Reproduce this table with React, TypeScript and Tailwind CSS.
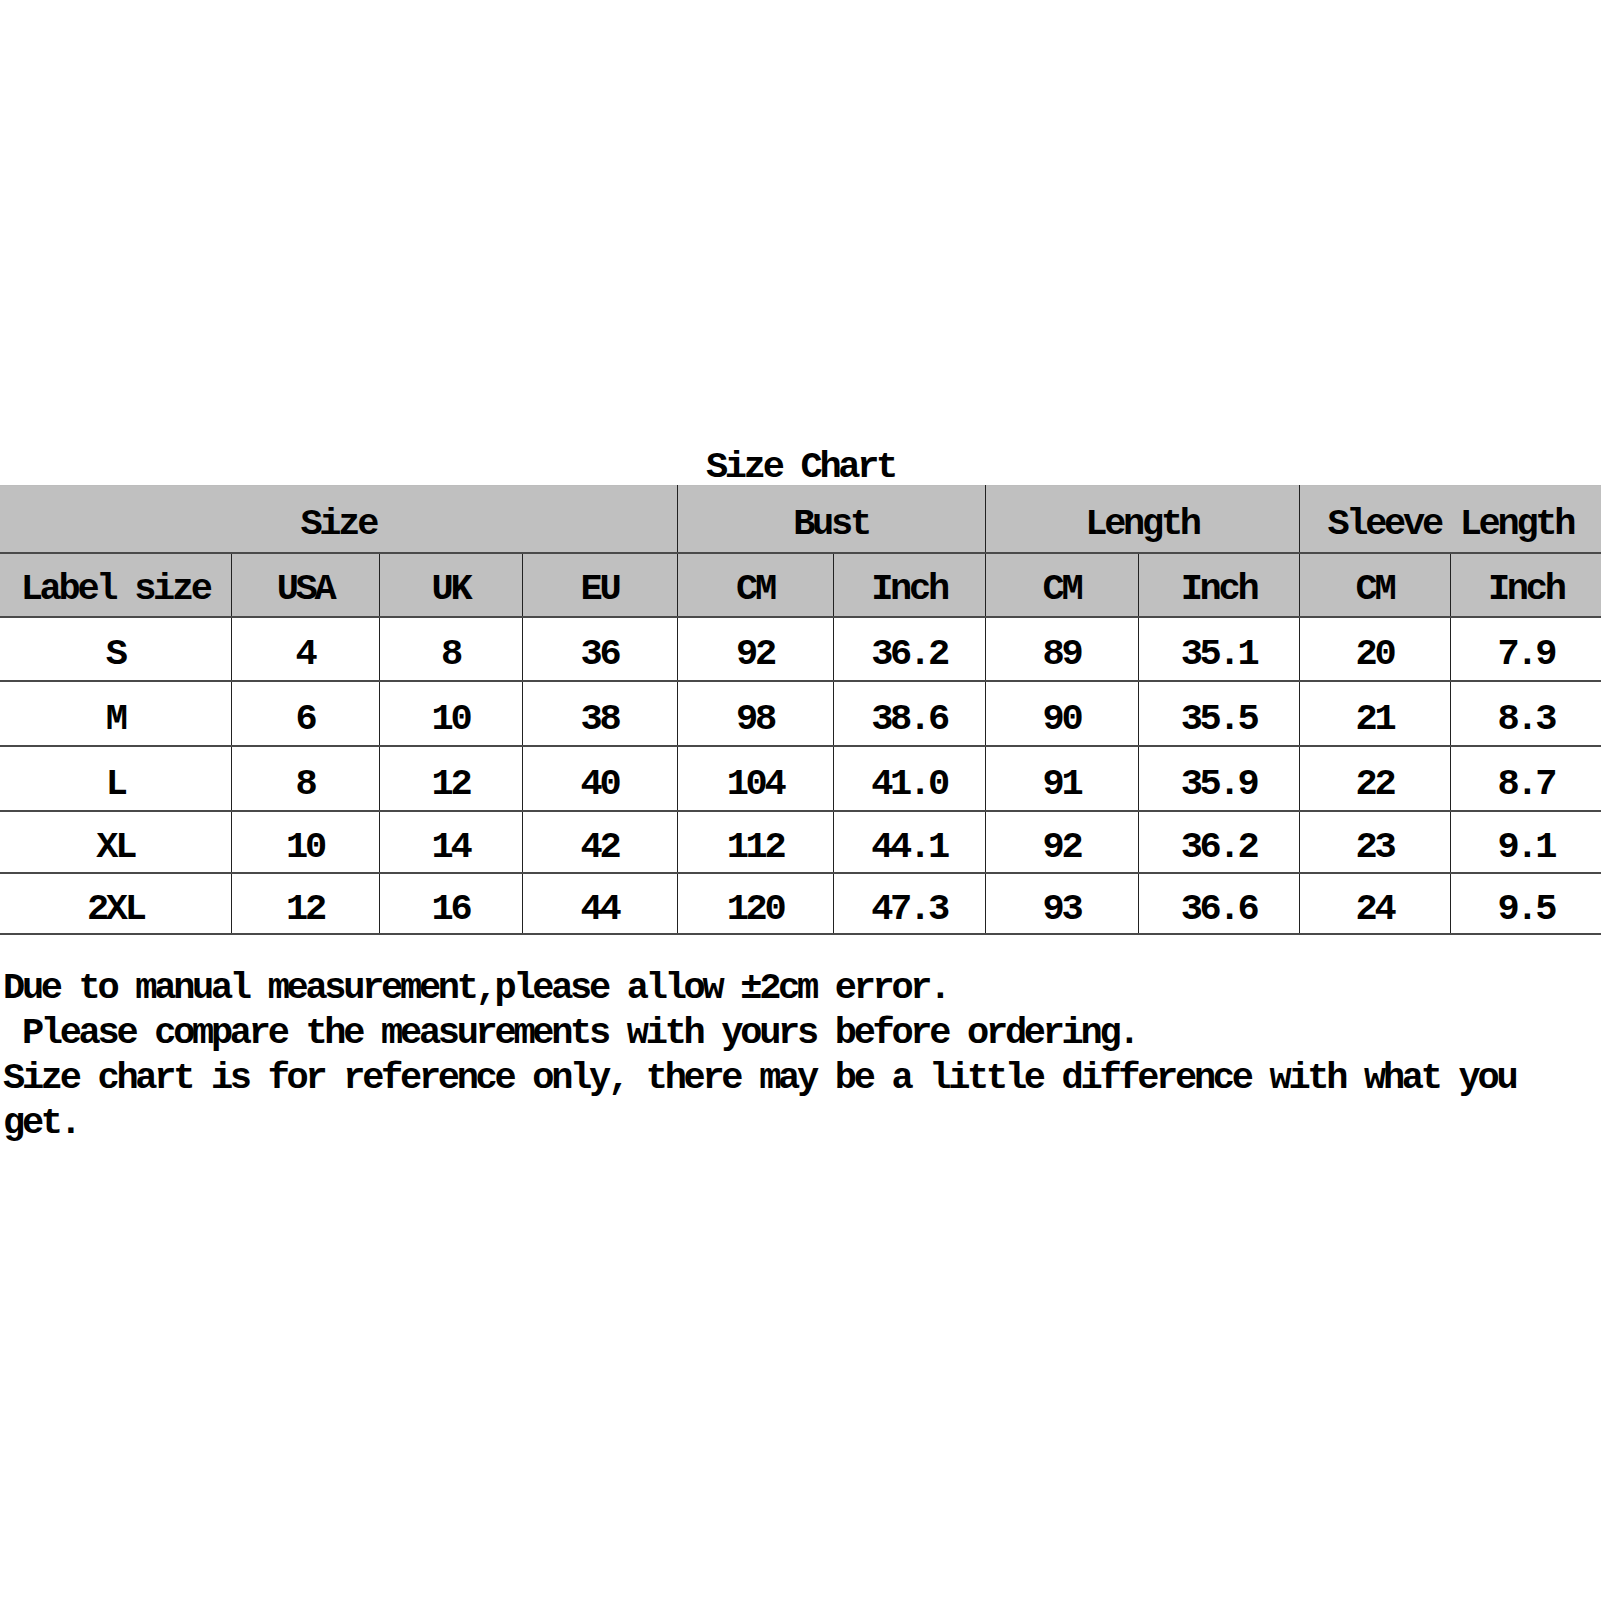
const font = "[font-family:'Liberation_Mono','DejaVu_Sans_Mono',monospace]";

const groups = [
  { label: "Size", span: 4 },
  { label: "Bust", span: 2 },
  { label: "Length", span: 2 },
  { label: "Sleeve Length", span: 2 },
];

const subHeads = ["Label size", "USA", "UK", "EU", "CM", "Inch", "CM", "Inch", "CM", "Inch"];

const rows = [
  { h: "h-[64px]", cells: ["S", "4", "8", "36", "92", "36.2", "89", "35.1", "20", "7.9"] },
  { h: "h-[65px]", cells: ["M", "6", "10", "38", "98", "38.6", "90", "35.5", "21", "8.3"] },
  { h: "h-[65px]", cells: ["L", "8", "12", "40", "104", "41.0", "91", "35.9", "22", "8.7"] },
  { h: "h-[62px]", cells: ["XL", "10", "14", "42", "112", "44.1", "92", "36.2", "23", "9.1"] },
  { h: "h-[61px]", cells: ["2XL", "12", "16", "44", "120", "47.3", "93", "36.6", "24", "9.5"] },
];

const widths = [231, 148, 143, 155, 156, 152, 153, 161, 151, 151];

export default function App() {
  return (
    <div
      className={`w-[1601px] h-[1601px] bg-white pt-[444px] text-black ${font} font-bold text-[37px] tracking-[-3.3px]`}
    >
      <h1 className="h-[41px] pt-[3px] text-center leading-[41px] text-[37px]">Size Chart</h1>
      <table className="w-[1601px] table-fixed border-collapse border-t border-[#bdbdbd] leading-[37px]">
        <colgroup>
          {widths.map((w, i) => (
            <col key={i} style={{ width: w }} />
          ))}
        </colgroup>
        <thead className="bg-[#c0c0c0]">
          <tr className="h-[67px] border-b-2 border-[#4a4a4a]">
            {groups.map((g, i) => (
              <th
                key={g.label}
                colSpan={g.span}
                className={`p-0 pt-[12px] text-center align-middle font-bold ${i > 0 ? "border-l border-[#222]" : ""}`}
              >
                {g.label}
              </th>
            ))}
          </tr>
          <tr className="h-[64px] border-b-2 border-[#4a4a4a]">
            {subHeads.map((h, i) => (
              <th
                key={i}
                className={`p-0 pt-[10px] text-center align-middle font-bold ${i > 0 ? "border-l border-[#222]" : ""}`}
              >
                {h}
              </th>
            ))}
          </tr>
        </thead>
        <tbody>
          {rows.map((r) => (
            <tr key={r.cells[0]} className={`${r.h} border-b-2 border-[#4a4a4a]`}>
              {r.cells.map((c, i) => (
                <td
                  key={i}
                  className={`p-0 pt-[12px] text-center align-middle ${i > 0 ? "border-l border-[#222]" : ""}`}
                >
                  {c}
                </td>
              ))}
            </tr>
          ))}
        </tbody>
      </table>
      <div className="mt-[31px] pl-[3px] leading-[45.3px] whitespace-pre">
        <p>Due to manual measurement,please allow ±2cm error.</p>
        <p> Please compare the measurements with yours before ordering.</p>
        <p>Size chart is for reference only, there may be a little difference with what you</p>
        <p>get.</p>
      </div>
    </div>
  );
}
